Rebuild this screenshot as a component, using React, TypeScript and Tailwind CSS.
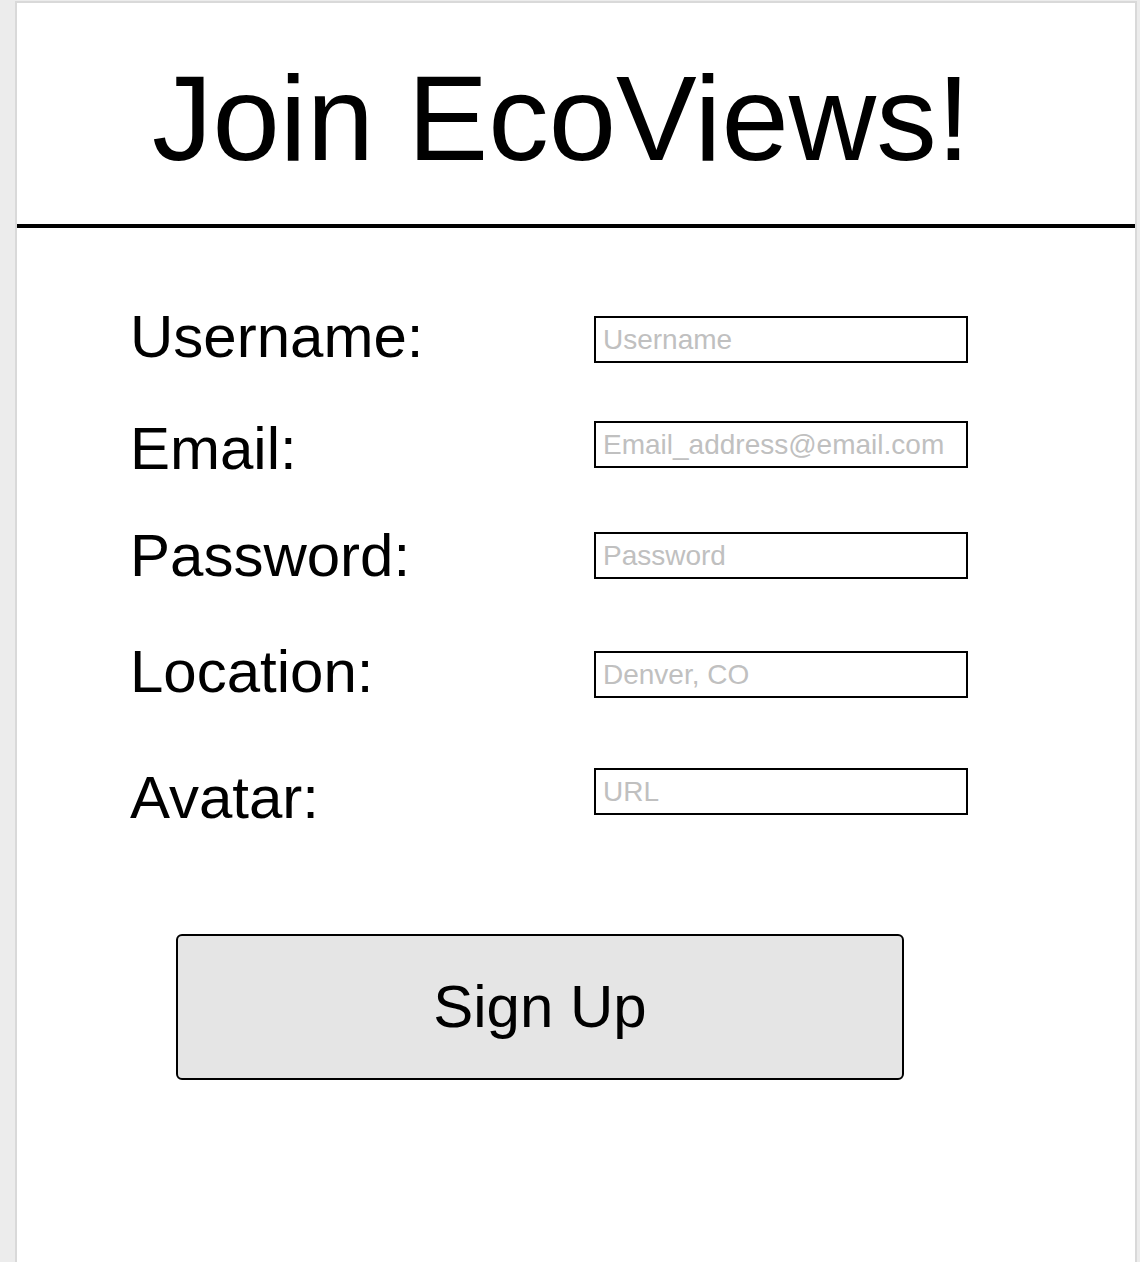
import React from "react";

const rows = [
  { label: "Username:", placeholder: "Username", type: "text", rowCls: "mt-0", inputCls: "mt-[9px]" },
  { label: "Email:", placeholder: "Email_address@email.com", type: "email", rowCls: "mt-[52px]", inputCls: "mt-[2px]" },
  { label: "Password:", placeholder: "Password", type: "password", rowCls: "mt-[47px]", inputCls: "mt-[6px]" },
  { label: "Location:", placeholder: "Denver, CO", type: "text", rowCls: "mt-[56px]", inputCls: "mt-[9px]" },
  { label: "Avatar:", placeholder: "URL", type: "text", rowCls: "mt-[66px]", inputCls: "mt-0" },
];

export default function App() {
  return (
    <div
      className="min-h-[1262px] bg-[#ececec] pt-[1px] pl-[15px] pr-[3px] text-black"
      style={{ fontFamily: '"Liberation Sans", Arial, Helvetica, sans-serif' }}
    >
      <div className="min-h-[1261px] border-l-2 border-r-2 border-t-2 border-[#d9d9d9] bg-white">
        <div className="h-[225px] border-b-4 border-black pt-[55px] pl-[135px]">
          <h1 className="text-[121px] leading-[120px] font-normal whitespace-nowrap">Join EcoViews!</h1>
        </div>
        <form className="pt-[79px] pl-[113px]" onSubmit={(e) => e.preventDefault()}>
          {rows.map((r) => (
            <div key={r.label} className={"flex items-start " + r.rowCls}>
              <label className="w-[464px] text-[60px] leading-[60px] whitespace-nowrap">{r.label}</label>
              <input
                type={r.type}
                placeholder={r.placeholder}
                className={
                  "h-[47px] w-[374px] border-2 border-black bg-white px-[7px] text-[28px] outline-none placeholder:text-[#c0c0c0] " +
                  r.inputCls
                }
                style={{ fontFamily: '"Liberation Sans", Arial, Helvetica, sans-serif' }}
              />
            </div>
          ))}
          <button
            type="submit"
            className="mt-[106px] ml-[46px] flex h-[146px] w-[728px] items-center justify-center rounded-[6px] border-2 border-black bg-[#e5e5e5] text-[60px] leading-none"
            style={{ fontFamily: '"Liberation Sans", Arial, Helvetica, sans-serif' }}
          >
            Sign Up
          </button>
        </form>
      </div>
    </div>
  );
}
